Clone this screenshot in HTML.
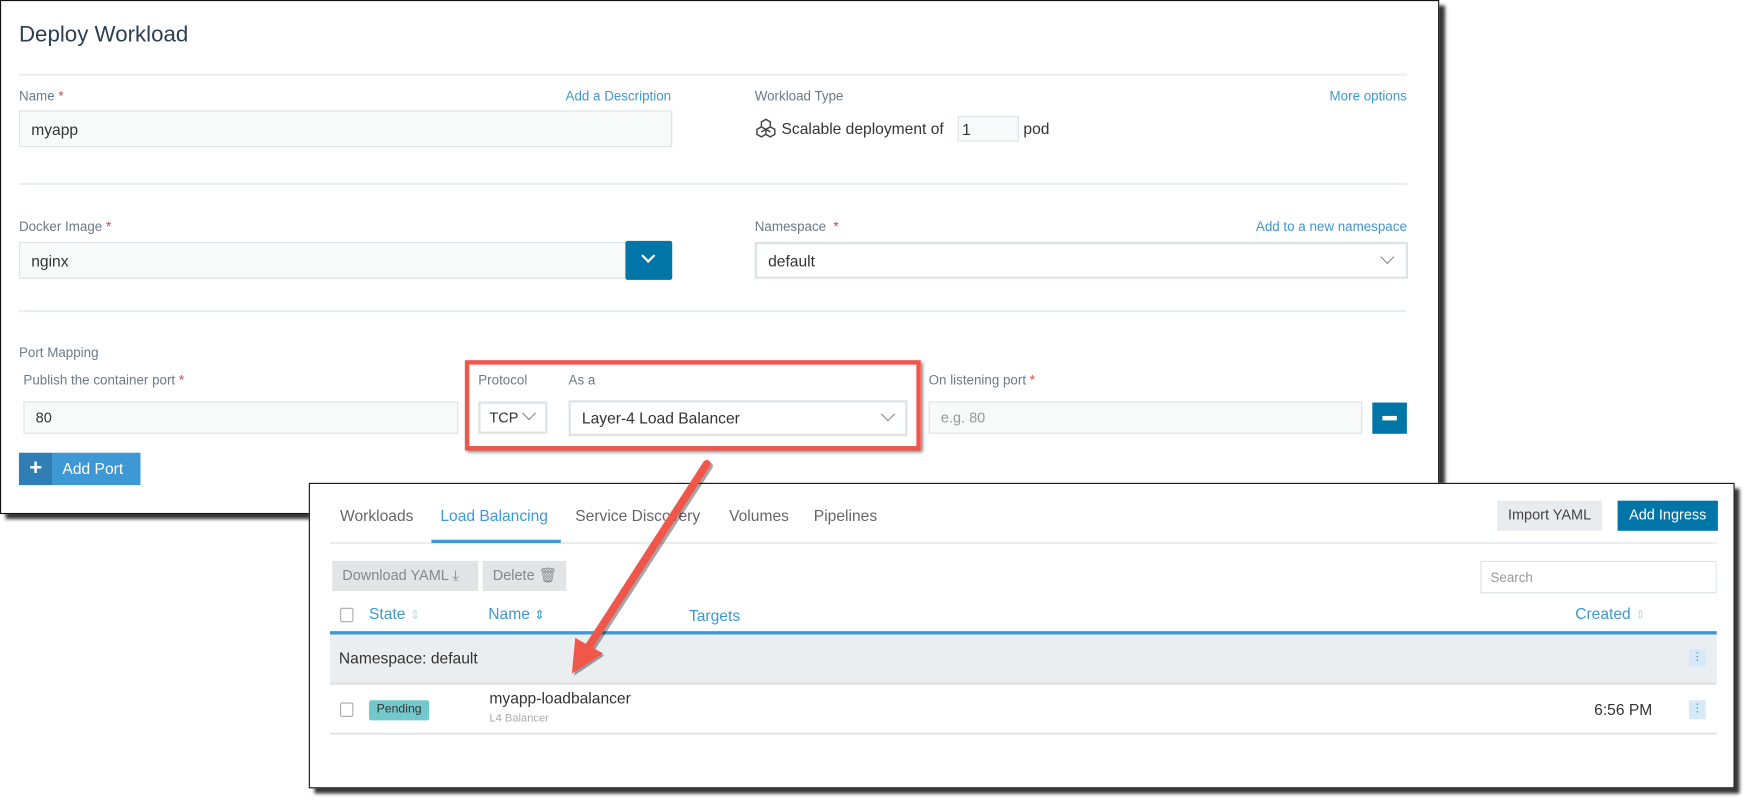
<!DOCTYPE html>
<html><head><meta charset="utf-8"><style>
*{box-sizing:border-box;margin:0;padding:0}
html,body{width:1748px;height:804px;overflow:hidden;background:#fff}
body{font-family:"Liberation Sans",sans-serif}
#w{position:absolute;left:0;top:0;width:1568px;height:721px;transform:scale(1.1148,1.1151);transform-origin:0 0}
.a{position:absolute;white-space:nowrap}
.lbl{font-size:12px;color:#6c7a89}
.req{color:#e0413d}
.lnk{font-size:12px;color:#3d98d3}
.inp{position:absolute;background:#f8faf9;border:1px solid #dde3e6;font-size:14px;color:#333;padding-left:10px;display:flex;align-items:center}
.sep{position:absolute;height:2px;background:#eaeef1}
.chev{position:absolute;width:9px;height:9px;border-right:1.3px solid #888;border-bottom:1.3px solid #888;transform:rotate(45deg)}
.panel{position:absolute;background:#fff;border:1.5px solid #111}
.blue{color:#3d98d3}
</style></head><body><div id="w">
<!-- top panel -->
<div class="panel" style="left:0;top:0;width:1291px;height:461px;box-shadow:5px 5px 3px #333"></div>
<div class="a" style="left:17px;top:20px;font-size:20px;color:#2c3e50">Deploy Workload</div>
<div class="sep" style="left:17px;top:66px;width:1245px"></div>
<div class="a lbl" style="left:17px;top:79px">Name <span class="req">*</span></div>
<div class="a lnk" style="right:966px;top:79px">Add a Description</div>
<div class="inp" style="left:17px;top:99px;width:586px;height:33px">myapp</div>
<div class="a lbl" style="left:677px;top:79px">Workload Type</div>
<div class="a lnk" style="right:306px;top:79px">More options</div>
<svg class="a" style="left:678px;top:106px" width="18" height="19" viewBox="0 0 18 19" fill="none" stroke="#444" stroke-width="1.3"><path d="M9 1l4 2.3v4.5L9 10 5 7.8V3.3z M5 7.8L1 10v4.5l4 2.3 4-2.3V10 M13 7.8l4 2.2v4.5l-4 2.3-4-2.3 M5 12.3l4-2.3 4 2.3"/></svg>
<div class="a" style="left:701px;top:107px;font-size:14px;color:#333">Scalable deployment of</div>
<div class="inp" style="left:859px;top:104px;width:55px;height:23px;padding-left:3px">1</div>
<div class="a" style="left:918px;top:107px;font-size:14px;color:#333">pod</div>
<div class="sep" style="left:17px;top:164px;width:1245px"></div>
<div class="a lbl" style="left:17px;top:196px">Docker Image <span class="req">*</span></div>
<div class="inp" style="left:17px;top:217px;width:545px;height:33px">nginx</div>
<div class="a" style="left:561px;top:216px;width:42px;height:35px;background:#0075a8;border-radius:2px"></div>
<div class="chev" style="left:577px;top:225px;border-color:#fff;border-width:2px"></div>
<div class="a lbl" style="left:677px;top:196px">Namespace &nbsp;<span class="req">*</span></div>
<div class="a lnk" style="right:306px;top:196px">Add to a new namespace</div>
<div class="inp" style="left:677px;top:217px;width:586px;height:33px;background:#fff;border-width:2px">default</div>
<div class="chev" style="left:1240px;top:226px"></div>
<div class="sep" style="left:17px;top:278px;width:1245px"></div>
<div class="a lbl" style="left:17px;top:309px">Port Mapping</div>
<div class="a lbl" style="left:21px;top:334px">Publish the container port <span class="req">*</span></div>
<div class="inp" style="left:21px;top:360px;width:390px;height:29px;font-size:13px">80</div>
<div class="a lbl" style="left:429px;top:334px">Protocol</div>
<div class="inp" style="left:429px;top:360px;width:62px;height:29px;background:#fff;border-width:2px;padding-left:8px;font-size:13px">TCP</div>
<div class="chev" style="left:470px;top:366px"></div>
<div class="a lbl" style="left:510px;top:334px">As a</div>
<div class="inp" style="left:510px;top:359px;width:304px;height:32px;background:#fff;border-width:2px">Layer-4 Load Balancer</div>
<div class="chev" style="left:792px;top:367px"></div>
<div class="a" style="left:417px;top:323px;width:409px;height:81px;border:4px solid #f0564a;box-shadow:2px 2px 3px #777"></div>
<div class="a lbl" style="left:833px;top:334px">On listening port <span class="req">*</span></div>
<div class="inp" style="left:833px;top:360px;width:389px;height:29px;color:#999;font-size:13px">e.g. 80</div>
<div class="a" style="left:1231px;top:361px;width:31px;height:28px;background:#0075a8"></div>
<div class="a" style="left:1240px;top:373px;width:13px;height:4px;background:#fff"></div>
<div class="a" style="left:17px;top:406px;width:30px;height:29px;background:#2f7fb6;color:#fff;font-size:20px;line-height:28px;text-align:center;font-weight:bold">+</div>
<div class="a" style="left:47px;top:406px;width:79px;height:29px;background:#3d98d3;color:#fff;font-size:14px;line-height:29px;padding-left:9px">Add Port</div>
<!-- bottom panel -->
<div class="panel" style="left:277px;top:433px;width:1279px;height:274px;box-shadow:5px 5px 3px #333"></div>
<div class="a" style="left:305px;top:454px;font-size:14px;color:#666">Workloads</div>
<div class="a blue" style="left:395px;top:454px;font-size:14px">Load Balancing</div>
<div class="a" style="left:516px;top:454px;font-size:14px;color:#666">Service Discovery</div>
<div class="a" style="left:654px;top:454px;font-size:14px;color:#666">Volumes</div>
<div class="a" style="left:730px;top:454px;font-size:14px;color:#666">Pipelines</div>
<div class="sep" style="left:296px;top:486px;width:1244px"></div>
<div class="a" style="left:387px;top:484px;width:116px;height:3px;background:#3d98d3"></div>
<div class="a" style="left:1343px;top:449px;width:94px;height:27px;background:#e9ecef;font-size:13px;color:#444;line-height:26px;text-align:center">Import YAML</div>
<div class="a" style="left:1451px;top:449px;width:90px;height:27px;background:#0075a8;font-size:13px;color:#fff;line-height:26px;text-align:center">Add Ingress</div>
<div class="a" style="left:298px;top:503px;width:131px;height:27px;background:#e2e4e6;font-size:13px;color:#888;line-height:26px;padding-left:9px">Download YAML ⤓</div>
<div class="a" style="left:433px;top:503px;width:75px;height:27px;background:#e2e4e6;font-size:13px;color:#888;line-height:26px;padding-left:9px">Delete 🗑</div>
<div class="inp" style="left:1328px;top:503px;width:212px;height:29px;background:#fff;color:#999;font-size:12px;padding-left:8px">Search</div>
<div class="a" style="left:305px;top:545px;width:12px;height:13px;border:1px solid #aaa;border-radius:2px"></div>
<div class="a blue" style="left:331px;top:542px;font-size:14px">State <span style="color:#c5dcee;font-size:11px">⇕</span></div>
<div class="a blue" style="left:438px;top:542px;font-size:14px">Name <span style="font-size:11px">⇕</span></div>
<div class="a blue" style="left:618px;top:544px;font-size:14px">Targets</div>
<div class="a blue" style="left:1413px;top:542px;font-size:14px">Created <span style="color:#c5dcee;font-size:11px">⇕</span></div>
<div class="a" style="left:296px;top:566px;width:1244px;height:3px;background:#3d98d3"></div>
<div class="a" style="left:296px;top:569px;width:1244px;height:43px;background:#ebeef0"></div>
<div class="a" style="left:304px;top:582px;font-size:14px;color:#333">Namespace: default</div>
<div class="a" style="left:1515px;top:582px;width:15px;height:16px;background:#d6e9f8;color:#3d98d3;font-size:10px;text-align:center;line-height:15px">⋮</div>
<div class="a" style="left:296px;top:612px;width:1244px;height:2px;background:#dcdfe1"></div>
<div class="a" style="left:305px;top:630px;width:12px;height:13px;border:1px solid #aaa;border-radius:2px"></div>
<div class="a" style="left:331px;top:628px;width:54px;height:18px;background:#72c9cb;border-radius:2px;font-size:11px;color:#333;line-height:17px;text-align:center">Pending</div>
<div class="a" style="left:439px;top:618px;font-size:14px;color:#333">myapp-loadbalancer</div>
<div class="a" style="left:439px;top:639px;font-size:10px;color:#aaa">L4 Balancer</div>
<div class="a" style="left:1430px;top:628px;font-size:14px;color:#333">6:56 PM</div>
<div class="a" style="left:1515px;top:628px;width:15px;height:17px;background:#d6e9f8;color:#3d98d3;font-size:10px;text-align:center;line-height:16px">⋮</div>
<div class="a" style="left:296px;top:657px;width:1244px;height:2px;background:#e4e6e8"></div>
<!-- arrow -->
<svg class="a" style="left:0;top:0" width="1568" height="721">
<g transform="translate(2,2)" opacity="0.35"><line x1="634" y1="416" x2="528" y2="580" stroke="#000" stroke-width="7" stroke-linecap="round"/><polygon points="513,604 517,573 540,586" fill="#000"/></g>
<line x1="634" y1="416" x2="528" y2="580" stroke="#f0564a" stroke-width="7" stroke-linecap="round"/>
<polygon points="513,604 516,572 541,586" fill="#f0564a"/>
</svg>
</div></body></html>
